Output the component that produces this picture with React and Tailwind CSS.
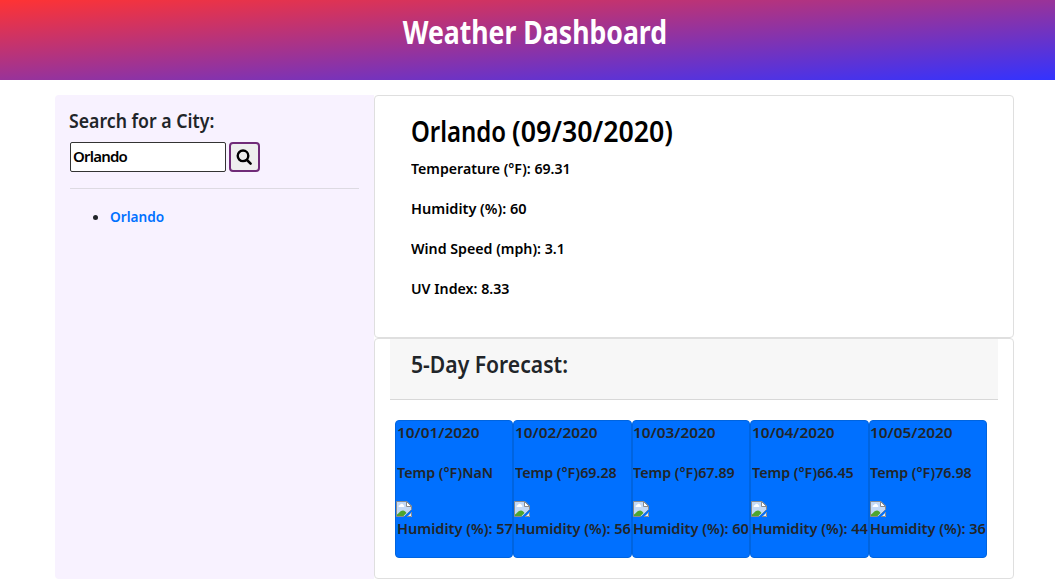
import React from "react";

const days = [
  { date: "10/01/2020", temp: "NaN", humidity: 57 },
  { date: "10/02/2020", temp: "69.28", humidity: 56 },
  { date: "10/03/2020", temp: "67.89", humidity: 60 },
  { date: "10/04/2020", temp: "66.45", humidity: 44 },
  { date: "10/05/2020", temp: "76.98", humidity: 36 },
];

function BrokenImage() {
  return (
    <svg className="block h-4 w-4" viewBox="0 0 16 16">
      <path d="M.5 .5H11L15.500 5V8.500L8.500 15.500H.5Z" fill="#c3d9f7" stroke="#8b8b8b" />
      <path d="M2.500 5.500a1.500 1.500 0 0 1 1.500-1.500a1.900 1.900 0 0 1 3.600 0.300a1 1 0 0 1 .4 1.700H3Z" fill="#fff" />
      <path d="M1 15V13.500C3 12.500 4 9.500 7 9.500C8.500 9.500 9.500 10.500 10.500 12L7.500 15Z" fill="#4ea52f" />
      <path d="M10.500 .5V5.500H15.500Z" fill="#fff" stroke="#8b8b8b" />
      <path d="M7.500 16L16 8.500V11L11 16Z" fill="#0070ff" />
      <path d="M11 16L16 11V16Z" fill="#e8eef6" />
      <path d="M11 15.500H15.500V11" fill="none" stroke="#8b8b8b" />
    </svg>
  );
}

export default function App() {
  return (
    <div className="h-[582px] overflow-hidden bg-white font-['Noto_Sans',sans-serif] text-[15px] leading-6 font-semibold text-[#212529]">
      <header className="flex h-20 justify-center bg-[linear-gradient(to_bottom_right,#ff3333,#3333ff)] pt-3 pl-3.5">
        <h1 className="scale-x-[.832] text-[32px] leading-10 font-bold whitespace-nowrap text-white">Weather Dashboard</h1>
      </header>
      <main className="flex pt-[15px] pl-[55px]">
        <aside className="h-[484px] w-[319px] shrink-0 rounded-l-sm bg-[#f8f2ff] px-[15px] pt-3.5">
          <h2 className="-ml-px origin-left scale-x-[.885] text-[20px] leading-6 font-semibold whitespace-nowrap">Search for a City:</h2>
          <div className="mt-[9px] flex gap-[3px]">
            <input className="h-[30px] w-[156px] rounded-[2px] border border-[#333] bg-white px-[2px] pb-0.5 tracking-[-0.8px] text-black outline-none" defaultValue="Orlando" />
            <button className="flex h-[30px] w-[31px] items-center justify-center rounded-[4px] border-2 border-[#702b78] bg-[#eee]" aria-label="Search">
              <svg className="-ml-px h-4 w-4" viewBox="0 0 16 16" fill="none" stroke="#000">
                <circle cx="7" cy="6.800" r="5.300" strokeWidth="2.400" />
                <path d="M11 11L14.600 14.600" strokeWidth="2.500" strokeLinecap="round" />
              </svg>
            </button>
          </div>
          <hr className="mt-4 border-[#dddae2]" />
          <ul className="mt-[15px] list-disc pl-10">
            <li><a className="inline-block origin-left scale-x-[.91] text-[#0071ff]">Orlando</a></li>
          </ul>
        </aside>
        <div className="w-[640px] shrink-0">
          <section className="h-[243px] rounded-[4px] border border-[#dfdfdf] pt-[19px] pl-9 whitespace-nowrap text-black">
            <h2 className="mb-2 flex gap-2 text-[28px] leading-[33px] font-semibold">
              <span className="w-[93px] origin-left scale-x-[.855]">Orlando</span>
              <span className="origin-left scale-x-[.955]">(09/30/2020)</span>
            </h2>
            <p className="mb-4 origin-left scale-x-[.943]">Temperature (°F): 69.31</p>
            <p className="mb-4 origin-left scale-x-[.968]">Humidity (%): 60</p>
            <p className="mb-4 origin-left scale-x-[.948]">Wind Speed (mph): 3.1</p>
            <p className="origin-left scale-x-[.948]">UV Index: 8.33</p>
          </section>
          <section className="h-[241px] rounded-[4px] border border-[#dfdfdf] px-[15px]">
            <div className="h-[61px] border-b border-[#d8d8d8] bg-[#f7f7f7] pt-2.5 pl-[21px]">
              <h3 className="origin-left scale-x-[.88] text-[24px] leading-[29px] font-semibold">5-Day Forecast:</h3>
            </div>
            <div className="mt-5 ml-[5px] grid w-[592px] grid-cols-5">
              {days.map((day) => (
                <article key={day.date} className="h-[138px] rounded-[4px] border border-[#0064df] bg-[#0070ff] whitespace-nowrap">
                  <p className="-mt-px mb-4 ml-[0.5px] origin-left scale-x-[1.025]">{day.date}</p>
                  <p className="mb-[17px] ml-[0.5px] origin-left scale-x-[.952]">Temp (°F){day.temp}</p>
                  <BrokenImage />
                  <p className="-mt-px ml-[0.5px] origin-left scale-x-[.97]">Humidity (%): {day.humidity}</p>
                </article>
              ))}
            </div>
          </section>
        </div>
      </main>
    </div>
  );
}
